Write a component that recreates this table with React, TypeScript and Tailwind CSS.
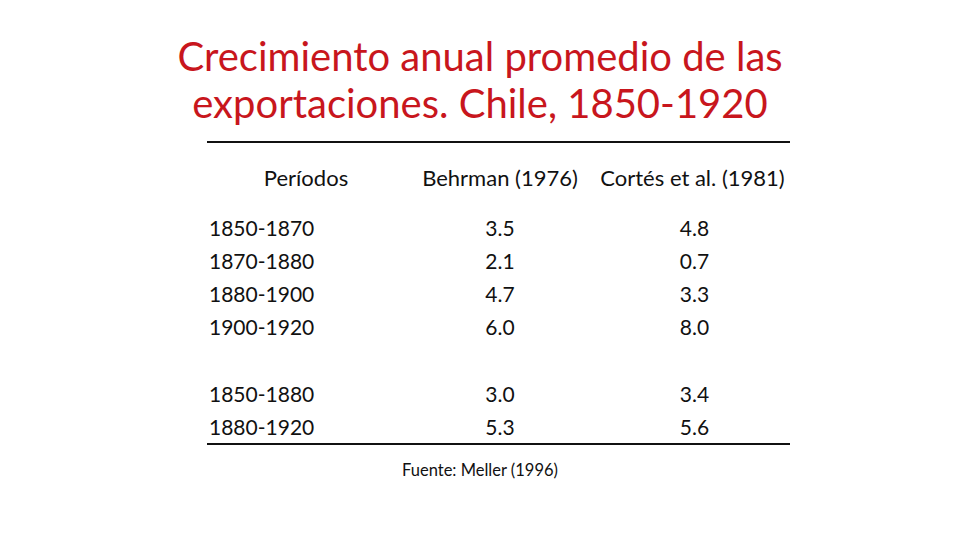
export default function App() {
  const font = { fontFamily: "Lato, 'Open Sans', sans-serif" };
  const rows1 = [
    ["1850-1870", "3.5", "4.8"],
    ["1870-1880", "2.1", "0.7"],
    ["1880-1900", "4.7", "3.3"],
    ["1900-1920", "6.0", "8.0"],
  ];
  const rows2 = [
    ["1850-1880", "3.0", "3.4"],
    ["1880-1920", "5.3", "5.6"],
  ];
  return (
    <div className="w-[960px] h-[540px] bg-white flex flex-col items-center overflow-hidden" style={font}>
      <h1 className="mt-[33px] text-center text-[#c8161d] text-[40px] leading-[47px] font-normal">
        Crecimiento anual promedio de las
        <br />
        exportaciones. Chile, 1850-1920
      </h1>
      <div className="mt-[14px] ml-[37px] w-[583px] border-t-2 border-b-2 border-[#111] text-[#111] text-[21px]">
        <div className="grid grid-cols-[198px_190px_195px] h-[68px] items-center pt-[1px] text-[22px]">
          <div className="text-center">Períodos</div>
          <div className="text-center">Behrman (1976)</div>
          <div className="text-center">Cortés et al. (1981)</div>
        </div>
        <div className="flex flex-col">
          {rows1.map((r) => (
            <div key={r[0]} className="grid grid-cols-[198px_190px_195px] h-[33px] items-center">
              <div className="pl-[2px]">{r[0]}</div>
              <div className="text-center">{r[1]}</div>
              <div className="text-center pl-[4px]">{r[2]}</div>
            </div>
          ))}
          <div className="h-[34px]" />
          {rows2.map((r) => (
            <div key={r[0]} className="grid grid-cols-[198px_190px_195px] h-[33px] items-center">
              <div className="pl-[2px]">{r[0]}</div>
              <div className="text-center">{r[1]}</div>
              <div className="text-center pl-[4px]">{r[2]}</div>
            </div>
          ))}
        </div>
      </div>
      <div className="mt-[13px] text-[16.5px] text-[#111]">Fuente: Meller (1996)</div>
    </div>
  );
}
